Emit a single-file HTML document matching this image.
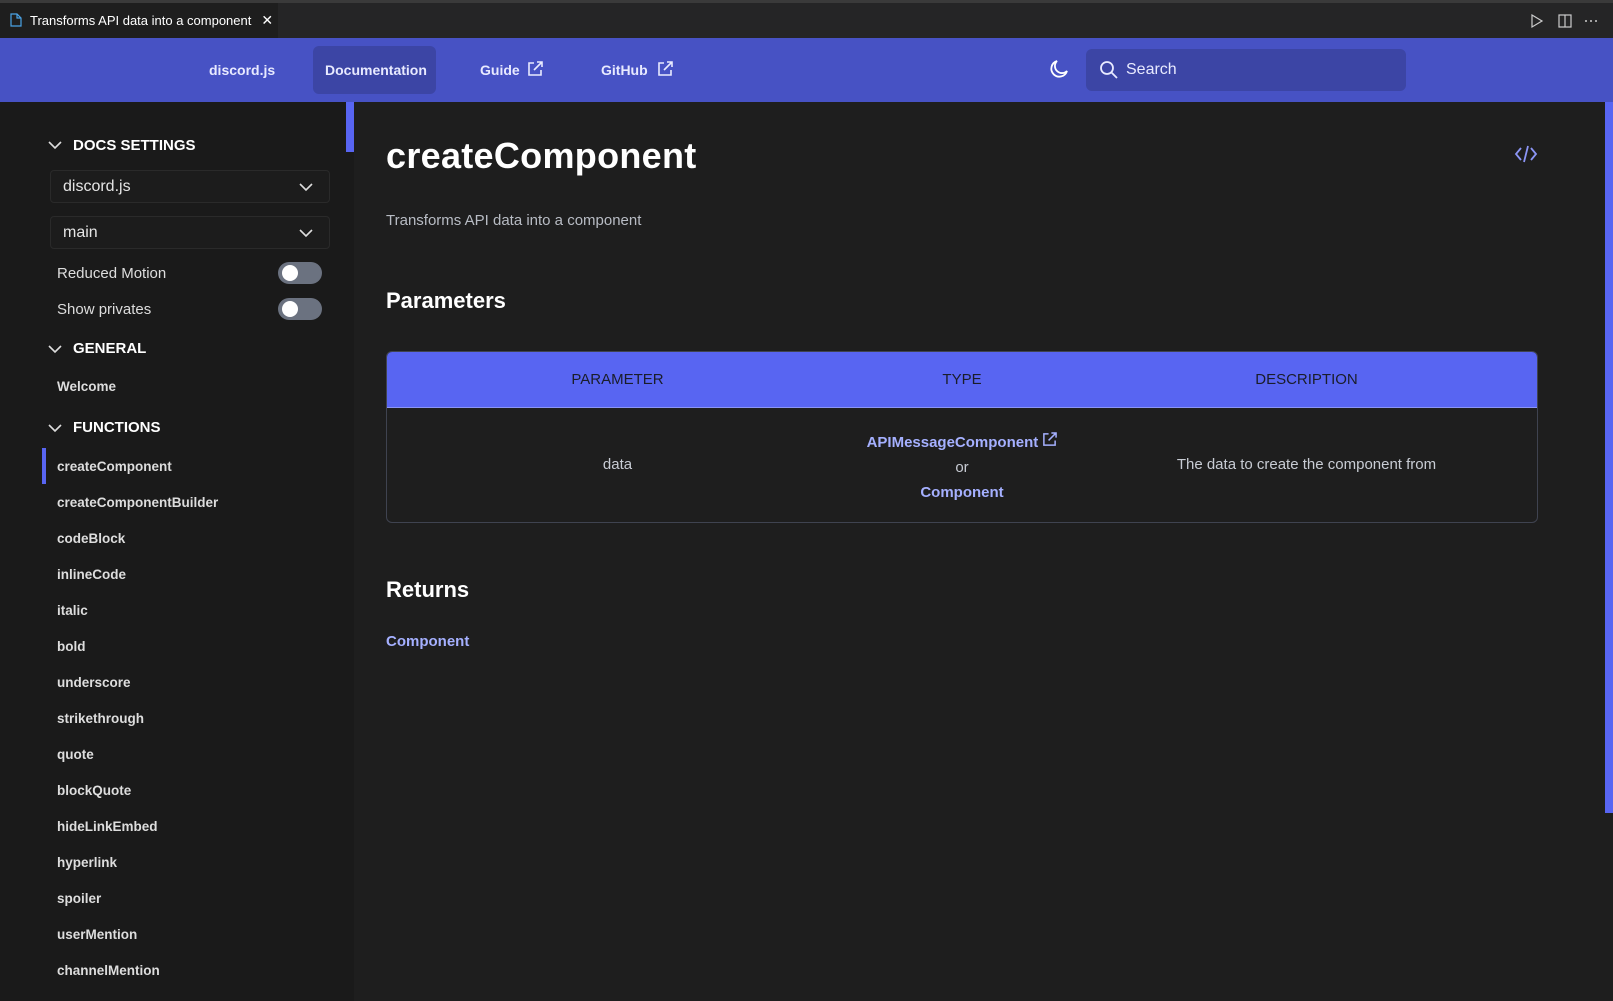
<!DOCTYPE html>
<html><head><meta charset="utf-8"><style>
*{margin:0;padding:0;box-sizing:border-box}
body{width:1613px;height:1001px;overflow:hidden;background:#1e1e1e;font-family:"Liberation Sans",sans-serif;position:relative;color:#e5e5e5}
.abs{position:absolute}
.top{left:0;top:0;width:1613px;height:3px;background:#3a3a3a}
.tabbar{left:0;top:3px;width:1613px;height:35px;background:#252526}
.tab{left:0;top:3px;width:278px;height:35px;background:#1e1e1e;color:#fff;font-size:13px;line-height:35px;padding-left:30px}
.hdr{left:0;top:38px;width:1613px;height:64px;background:#4752c4}
.nav{color:#e8eaff;font-size:14px;font-weight:bold;top:38px;line-height:64px}
.docbox{left:313px;top:46px;width:123px;height:48px;background:#3c45a5;border-radius:6px}
.search{left:1086px;top:49px;width:320px;height:42px;background:#3c45a5;border-radius:6px;color:#e8eaff;font-size:16px;line-height:42px;padding-left:40px}
.side{left:0;top:102px;width:354px;height:899px;background:#1a1a1a}
.sec{font-size:15px;font-weight:bold;color:#fff;left:73px}
.chev{left:48px}
.sel{left:50px;width:280px;height:33px;border:1px solid #2a2a2a;background:#1c1c1c;border-radius:4px;font-size:16px;line-height:31px;padding-left:12px;color:#e5e5e5}
.tog{left:278px;width:44px;height:22px;border-radius:11px;background:#6b7280}
.tog:after{content:"";position:absolute;left:4px;top:3px;width:16px;height:16px;border-radius:50%;background:#fff}
.lbl{left:57px;font-size:15px;color:#ddd}
.it{left:57px;font-size:13.5px;font-weight:bold;color:#ddd}
.c1{width:461px}.c2{width:228px}.c3{width:461px}
</style></head><body>
<div class="abs top"></div><div class="abs tabbar"></div>
<div class="abs tab">Transforms API data into a component<span style="margin-left:10px;font-size:14px">✕</span></div>
<svg class="abs" style="left:10px;top:13px" width="12" height="14" viewBox="0 0 12 14"><path d="M1 1h6l4 4v8H1z M7 1v4h4" fill="none" stroke="#4aa3e6" stroke-width="1.2"/></svg>
<svg class="abs" style="left:1530px;top:13px" width="80" height="16" viewBox="0 0 80 16"><path d="M2 2l10 6-10 6z" fill="none" stroke="#ccc" stroke-width="1.2"/><rect x="29" y="2" width="12" height="12" fill="none" stroke="#ccc" stroke-width="1.2"/><path d="M35 2v12" stroke="#ccc" stroke-width="1.2"/><circle cx="56" cy="8" r="1" fill="#ccc"/><circle cx="61" cy="8" r="1" fill="#ccc"/><circle cx="66" cy="8" r="1" fill="#ccc"/></svg>
<div class="abs hdr"></div>
<div class="abs docbox"></div>
<div class="abs nav" style="left:209px">discord.js</div>
<div class="abs nav" style="left:325px">Documentation</div>
<div class="abs nav" style="left:480px">Guide</div>
<div class="abs nav" style="left:601px">GitHub</div>
<svg class="abs" style="left:527px;top:61px" width="16" height="16" viewBox="0 0 16 16" fill="none" stroke="#e8eaff" stroke-width="1.6"><path d="M7 2H2v12h12V9M10 1h5v5M15 1L7 9"/></svg>
<svg class="abs" style="left:657px;top:61px" width="16" height="16" viewBox="0 0 16 16" fill="none" stroke="#e8eaff" stroke-width="1.6"><path d="M7 2H2v12h12V9M10 1h5v5M15 1L7 9"/></svg>
<svg class="abs" style="left:1047px;top:59px" width="22" height="22" viewBox="0 0 22 22"><path d="M10 2a8 8 0 1 0 10 10A7 7 0 0 1 10 2z" fill="none" stroke="#fff" stroke-width="1.8"/></svg>
<div class="abs search">Search</div>
<svg class="abs" style="left:1099px;top:60px" width="20" height="20" viewBox="0 0 20 20" fill="none" stroke="#e8eaff" stroke-width="1.8"><circle cx="8" cy="8" r="6"/><path d="M12.5 12.5L18 18"/></svg>
<div class="abs side"></div>
<div class="abs" style="left:346px;top:102px;width:8px;height:50px;background:#5865f2"></div>
<div class="abs" style="left:1605px;top:102px;width:8px;height:711px;background:#5865f2"></div>
<svg class="abs chev" style="top:140px" width="14" height="10" viewBox="0 0 14 10"><path d="M1 2l6 6 6-6" fill="none" stroke="#ddd" stroke-width="1.6"/></svg>
<div class="abs sec" style="top:137px">DOCS SETTINGS</div>
<div class="abs sel" style="top:170px">discord.js</div>
<div class="abs sel" style="top:216px">main</div>
<svg class="abs" style="left:299px;top:182px" width="14" height="10" viewBox="0 0 14 10"><path d="M1 2l6 6 6-6" fill="none" stroke="#ddd" stroke-width="1.6"/></svg>
<svg class="abs" style="left:299px;top:228px" width="14" height="10" viewBox="0 0 14 10"><path d="M1 2l6 6 6-6" fill="none" stroke="#ddd" stroke-width="1.6"/></svg>
<div class="abs lbl" style="top:265px">Reduced Motion</div><div class="abs tog" style="top:262px"></div>
<div class="abs lbl" style="top:301px">Show privates</div><div class="abs tog" style="top:298px"></div>
<svg class="abs chev" style="top:344px" width="14" height="10" viewBox="0 0 14 10"><path d="M1 2l6 6 6-6" fill="none" stroke="#ddd" stroke-width="1.6"/></svg>
<div class="abs sec" style="top:340px">GENERAL</div>
<div class="abs it" style="top:379px">Welcome</div>
<svg class="abs chev" style="top:423px" width="14" height="10" viewBox="0 0 14 10"><path d="M1 2l6 6 6-6" fill="none" stroke="#ddd" stroke-width="1.6"/></svg>
<div class="abs sec" style="top:419px">FUNCTIONS</div>
<div class="abs" style="left:42px;top:448px;width:4px;height:36px;background:#5865f2"></div>
<div class="abs it" style="top:459px">createComponent</div>
<div class="abs it" style="top:495px">createComponentBuilder</div>
<div class="abs it" style="top:531px">codeBlock</div>
<div class="abs it" style="top:567px">inlineCode</div>
<div class="abs it" style="top:603px">italic</div>
<div class="abs it" style="top:639px">bold</div>
<div class="abs it" style="top:675px">underscore</div>
<div class="abs it" style="top:711px">strikethrough</div>
<div class="abs it" style="top:747px">quote</div>
<div class="abs it" style="top:783px">blockQuote</div>
<div class="abs it" style="top:819px">hideLinkEmbed</div>
<div class="abs it" style="top:855px">hyperlink</div>
<div class="abs it" style="top:891px">spoiler</div>
<div class="abs it" style="top:927px">userMention</div>
<div class="abs it" style="top:963px">channelMention</div>
<div class="abs" style="left:386px;top:135px;font-size:36px;font-weight:bold;color:#fff;letter-spacing:0.3px">createComponent</div>
<svg class="abs" style="left:1514px;top:144px" width="24" height="20" viewBox="0 0 24 20" fill="none" stroke="#8b95f5" stroke-width="1.8"><path d="M7 4L2 10l5 6M17 4l5 6-5 6M14 2l-4 16"/></svg>
<div class="abs" style="left:386px;top:212px;font-size:15px;color:#b8bcc4">Transforms API data into a component</div>
<div class="abs" style="left:386px;top:288px;font-size:22px;font-weight:bold;color:#fff">Parameters</div>
<div class="abs" style="left:386px;top:351px;width:1152px;height:172px;border:1px solid #3f4350;border-radius:6px;overflow:hidden">
<div style="height:56px;background:#5865f2;border-bottom:1px solid #8b95f5;display:flex;font-size:15px;color:#1a1d2a;line-height:55px;text-align:center"><div class="c1">PARAMETER</div><div class="c2">TYPE</div><div class="c3">DESCRIPTION</div></div>
<div style="display:flex;text-align:center;font-size:15px;color:#c8ccd4;padding-top:22px">
<div class="c1" style="padding-top:26px">data</div>
<div class="c2" style="line-height:25px;white-space:nowrap"><span style="color:#a5b0ff;font-weight:bold">APIMessageComponent</span> <svg width="15" height="15" viewBox="0 0 16 16" fill="none" stroke="#a5b0ff" stroke-width="1.6"><path d="M7 2H2v12h12V9M10 1h5v5M15 1L7 9"/></svg><br>or<br><span style="color:#a5b0ff;font-weight:bold">Component</span></div>
<div class="c3" style="padding-top:26px">The data to create the component from</div>
</div></div>
<div class="abs" style="left:386px;top:577px;font-size:22px;font-weight:bold;color:#fff">Returns</div>
<div class="abs" style="left:386px;top:633px;font-size:15px;font-weight:bold;color:#a5b0ff">Component</div>
</body></html>
